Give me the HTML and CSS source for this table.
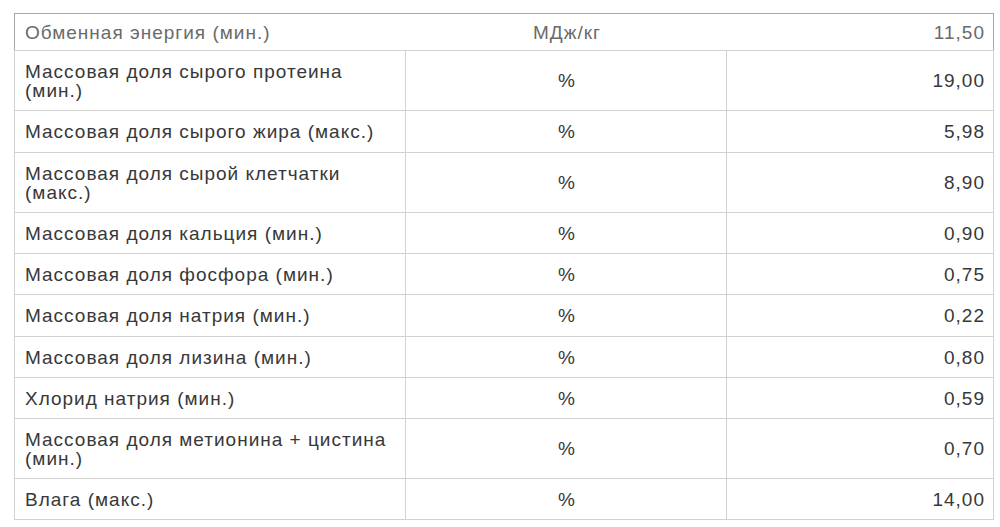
FILE: index.html
```html
<!DOCTYPE html>
<html lang="ru">
<head>
<meta charset="utf-8">
<title>Состав</title>
<link rel="stylesheet" href="styles.css">
</head>
<body>
<div class="page">
  <table class="spec">
    <colgroup>
      <col class="c-name">
      <col class="c-unit">
      <col class="c-val">
    </colgroup>
    <tbody>
      <tr class="head-row">
        <td class="name">Обменная энергия (мин.)</td>
        <td class="unit">МДж/кг</td>
        <td class="val">11,50</td>
      </tr>
      <tr class="tall"><td class="name">Массовая доля сырого протеина (мин.)</td><td class="unit">%</td><td class="val">19,00</td></tr>
      <tr class="plus"><td class="name">Массовая доля сырого жира (макс.)</td><td class="unit">%</td><td class="val">5,98</td></tr>
      <tr class="tall"><td class="name">Массовая доля сырой клетчатки (макс.)</td><td class="unit">%</td><td class="val">8,90</td></tr>
      <tr><td class="name">Массовая доля кальция (мин.)</td><td class="unit">%</td><td class="val">0,90</td></tr>
      <tr><td class="name">Массовая доля фосфора (мин.)</td><td class="unit">%</td><td class="val">0,75</td></tr>
      <tr class="plus"><td class="name">Массовая доля натрия (мин.)</td><td class="unit">%</td><td class="val">0,22</td></tr>
      <tr><td class="name">Массовая доля лизина (мин.)</td><td class="unit">%</td><td class="val">0,80</td></tr>
      <tr><td class="name">Хлорид натрия (мин.)</td><td class="unit">%</td><td class="val">0,59</td></tr>
      <tr class="tall"><td class="name">Массовая доля метионина + цистина (мин.)</td><td class="unit">%</td><td class="val">0,70</td></tr>
      <tr><td class="name">Влага (макс.)</td><td class="unit">%</td><td class="val">14,00</td></tr>
    </tbody>
  </table>
</div>
</body>
</html>
```

FILE: styles.css
```css
html, body {
  margin: 0;
  padding: 0;
  background: #ffffff;
}

.page {
  padding: 13px 0 0 14px;
  font-family: "Liberation Sans", Arial, sans-serif;
}

.spec {
  width: 979px;
  border-collapse: collapse;
  table-layout: fixed;
  font-size: 19px;
  letter-spacing: 1px;
  line-height: 19px;
  color: #383838;
}

.c-name { width: 391px; }
.c-unit { width: 321px; }
.c-val { width: 267px; }

.spec td {
  border: 1px solid #d2d2d2;
  padding: 0 8px 0 10px;
  height: 40px;
  vertical-align: middle;
}

.spec tr.plus td {
  height: 41px;
}

.spec tr.tall td {
  height: 59px;
}

.spec td.unit {
  text-align: center;
}

.spec td.val {
  text-align: right;
}

.spec tr.head-row td {
  height: 36px;
  color: #6a6a6a;
  border-top: 1px solid #a8a8a8;
  border-left: none;
  border-right: none;
}

.spec tr.head-row td.name {
  border-left: 1px solid #a8a8a8;
}

.spec tr.head-row td.val {
  border-right: 1px solid #a8a8a8;
}
```
